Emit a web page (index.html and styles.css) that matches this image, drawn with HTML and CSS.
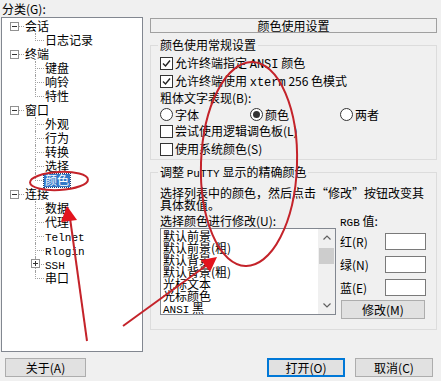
FILE: index.html
```html
<!DOCTYPE html>
<html lang="zh-CN">
<head>
  <meta charset="UTF-8" />
  <meta name="viewport" content="width=device-width, initial-scale=1.0"/>
  <title>PuTTY 配置 - 颜色</title>
  <link rel="stylesheet" href="styles.css">
</head>
<body>
  <div class="dialog">
    <div class="main">
      <div class="left">
        <div class="cat">分类(G):</div>
        <div class="treebox">
          <ul class="tree">
            <li>
              <div class="item"><span class="tog"></span>会话</div>
              <ul class="kids"><li>日志记录</li></ul>
            </li>
            <li>
              <div class="item"><span class="tog"></span>终端</div>
              <ul class="kids"><li>键盘</li><li>响铃</li><li>特性</li></ul>
            </li>
            <li>
              <div class="item"><span class="tog"></span>窗口</div>
              <ul class="kids">
                <li>外观</li><li>行为</li><li>转换</li><li>选择</li>
                <li><span class="sel">颜色</span></li>
              </ul>
            </li>
            <li>
              <div class="item"><span class="tog"></span>连接</div>
              <ul class="kids">
                <li>数据</li><li>代理</li>
                <li><span class="en">Telnet</span></li>
                <li><span class="en">Rlogin</span></li>
                <li><span class="tog plus"></span><span class="en">SSH</span></li>
                <li>串口</li>
              </ul>
            </li>
          </ul>
        </div>
      </div>

      <div class="right">
        <div class="ptitle">颜色使用设置</div>

        <fieldset class="grp g1">
          <legend>颜色使用常规设置</legend>
          <div class="opt"><span class="cb"><svg viewBox="0 0 11 11"><polyline points="2,5.5 4.5,8 9,2.5"/></svg></span><span class="t">允许终端指定 <span class="en">ANSI</span> 颜色</span></div>
          <div class="opt"><span class="cb"><svg viewBox="0 0 11 11"><polyline points="2,5.5 4.5,8 9,2.5"/></svg></span><span class="t">允许终端使用 <span class="en">xterm</span> 256 色模式</span></div>
          <div class="opt lab">粗体文字表现(B):</div>
          <div class="radios">
            <div class="rd"><span class="rb"></span>字体</div>
            <div class="rd"><span class="rb on"></span>颜色</div>
            <div class="rd"><span class="rb"></span>两者</div>
          </div>
          <div class="opt"><span class="cb"></span><span class="t">尝试使用逻辑调色板(L)</span></div>
          <div class="opt"><span class="cb"></span><span class="t">使用系统颜色(S)</span></div>
        </fieldset>

        <fieldset class="grp g2">
          <legend>调整 <span class="en">PuTTY</span> 显示的精确颜色</legend>
          <div class="hint">选择列表中的颜色，然后点击“修改”按钮改变其<br>具体数值。</div>
          <div class="pick">
            <div class="pleft">
              <div class="plab">选择颜色进行修改(U):</div>
              <div class="lbox">
                <ul class="clist">
                  <li>默认前景</li>
                  <li>默认前景(粗)</li>
                  <li>默认背景</li>
                  <li>默认背景(粗)</li>
                  <li>光标文本</li>
                  <li>光标颜色</li>
                  <li><span class="en">ANSI</span> 黑</li>
                </ul>
                <div class="sbar">
                  <div class="arr"><svg width="8" height="5" viewBox="0 0 8 5"><polyline points="0.5,4.5 4,1 7.5,4.5"/></svg></div>
                  <div class="thumb"></div>
                  <div class="arr down"><svg width="8" height="5" viewBox="0 0 8 5"><polyline points="0.5,0.5 4,4 7.5,0.5"/></svg></div>
                </div>
              </div>
            </div>
            <div class="rgb">
              <div class="plab"><span class="en">RGB</span> 值:</div>
              <div class="rgbrows">
                <div class="rgbrow"><span>红(R)</span><span class="num"></span></div>
                <div class="rgbrow"><span>绿(N)</span><span class="num"></span></div>
                <div class="rgbrow"><span>蓝(E)</span><span class="num"></span></div>
              </div>
              <button class="btn mod">修改(M)</button>
            </div>
          </div>
        </fieldset>
      </div>
    </div>

    <div class="foot">
      <button class="btn about">关于(A)</button>
      <button class="btn ok">打开(O)</button>
      <button class="btn cancel">取消(C)</button>
    </div>

    <!-- red annotation marks drawn over the dialog -->
    <svg class="marks" width="441" height="381" viewBox="0 0 441 381">
      <ellipse cx="59" cy="181" rx="29" ry="9" transform="rotate(-3 59 181)"/>
      <ellipse cx="249" cy="164" rx="48" ry="102" transform="rotate(2 249 164)"/>
      <line x1="87" y1="341" x2="70" y2="218"/>
      <polygon points="67,206 61,222 77,220"/>
      <line x1="123" y1="326" x2="207" y2="265"/>
      <polygon points="217,257 201,260 210,272"/>
    </svg>
  </div>
</body>
</html>
```

FILE: styles.css
```css
* {
  box-sizing: border-box;
}

body {
  margin: 0;
  background-color: #f0f0f0;
  font-family: "Noto Sans CJK SC", "Liberation Sans", sans-serif;
  font-size: 12px;
  color: #000;
}

.dialog {
  position: relative;
  width: 441px;
  height: 381px;
  overflow: hidden;
}

.en {
  font-family: "Liberation Mono", monospace;
  font-size: 11px;
  line-height: 10px;
}

.main {
  display: flex;
  height: 352px;
}

/* left: category tree */
.left {
  width: 143px;
  padding-left: 1px;
}

.cat {
  height: 17px;
  line-height: 17px;
  padding-left: 1px;
}

.treebox {
  height: 335px;
  background-color: #fff;
  border: 1px solid #828790;
}

.tree,
.tree ul {
  list-style: none;
  margin: 0;
  padding: 0;
}

.tree {
  padding-top: 1px;
}

.tree li {
  line-height: 14px;
  white-space: nowrap;
}

.item {
  position: relative;
  height: 14px;
  padding-left: 23px;
}

.item::after {
  content: "";
  position: absolute;
  left: 17px;
  top: 7px;
  width: 5px;
  border-top: 1px dotted #a0a0a0;
}

.tog {
  position: absolute;
  left: 8px;
  top: 3px;
  width: 9px;
  height: 9px;
  border: 1px solid #919191;
  background-color: #fff;
  z-index: 1;
}

.tog::before {
  content: "";
  position: absolute;
  left: 1px;
  top: 3px;
  width: 5px;
  border-top: 1px solid #333;
}

.tog.plus {
  left: -4px;
  top: 2px;
}

.tog.plus::after {
  content: "";
  position: absolute;
  left: 3px;
  top: 1px;
  height: 5px;
  border-left: 1px solid #333;
}

.kids {
  padding-left: 33px !important;
}

.kids li {
  position: relative;
  height: 14px;
  padding-left: 10px;
}

.kids li::before {
  content: "";
  position: absolute;
  left: 0;
  top: 0;
  width: 8px;
  height: 7px;
  border-left: 1px dotted #a0a0a0;
  border-bottom: 1px dotted #a0a0a0;
}

.kids li:not(:last-child)::after {
  content: "";
  position: absolute;
  left: 0;
  top: 7px;
  bottom: 0;
  border-left: 1px dotted #a0a0a0;
}

.sel {
  display: inline-block;
  vertical-align: top;
  height: 13px;
  margin-top: 1px;
  line-height: 12px;
  padding: 0 1px;
  margin-left: -1px;
  background-color: #3278c8;
  color: #fff;
  outline: 1px dotted #1a3f73;
}

/* right: colour settings panel */
.right {
  margin-left: 7px;
  width: 287px;
  padding-top: 18px;
}

.ptitle {
  height: 15px;
  line-height: 13px;
  border: 1px solid #a0a0a0;
  text-align: center;
}

.grp {
  margin: 4px 0 0;
  padding: 1px 0 0 9px;
  border: 1px solid #dcdcdc;
  min-width: 0;
}

.grp legend {
  height: 16px;
  padding: 0 2px;
  margin-left: -2px;
  line-height: 16px;
  white-space: nowrap;
}

.opt {
  display: flex;
  align-items: center;
  height: 18px;
  line-height: 16px;
  white-space: nowrap;
}

.opt .en {
  font-size: 12px;
}

.opt.lab {
  height: 16px;
}

.cb {
  display: flex;
  align-items: center;
  justify-content: center;
  flex: none;
  width: 13px;
  height: 13px;
  border: 1px solid #333;
  background-color: #fff;
  margin-right: 2px;
}

.cb svg {
  width: 11px;
  height: 11px;
  fill: none;
  stroke: #222;
  stroke-width: 1.4;
}

.radios {
  display: flex;
  height: 16px;
}

.rd {
  display: flex;
  align-items: center;
  width: 90px;
}

.rb {
  display: flex;
  align-items: center;
  justify-content: center;
  width: 13px;
  height: 13px;
  border: 1px solid #333;
  border-radius: 50%;
  background-color: #fff;
  margin-right: 2px;
}

.rb.on::after {
  content: "";
  width: 7px;
  height: 7px;
  border-radius: 50%;
  background-color: #333;
}

.g1 {
  height: 123px;
}

.g2 {
  margin-top: 4px;
  padding-bottom: 10px;
}

.hint {
  margin-top: 6px;
  line-height: 12px;
  white-space: nowrap;
}

.pick {
  display: flex;
}

.plab {
  margin-top: 3px;
  height: 14px;
  line-height: 14px;
  white-space: nowrap;
}

.pleft {
  width: 176px;
}

.lbox {
  display: flex;
  height: 87px;
  border: 1px solid #828790;
  background-color: #fff;
}

.clist {
  flex: 1;
  list-style: none;
  margin: 0;
  padding: 1px 0 0 2px;
  line-height: 12px;
  overflow: hidden;
  white-space: nowrap;
}

.clist li {
  height: 12px;
}

.sbar {
  width: 17px;
  background-color: #f0f0f0;
  display: flex;
  flex-direction: column;
  align-items: center;
}

.arr {
  height: 17px;
  display: flex;
  align-items: center;
  justify-content: center;
}

.arr svg {
  fill: none;
  stroke: #606060;
  stroke-width: 1.2;
}

.arr.down {
  margin-top: auto;
}

.thumb {
  width: 15px;
  height: 16px;
  margin-top: 2px;
  background-color: #cdcdcd;
}

.rgb {
  width: 86px;
  margin-left: 4px;
}

.rgbrows {
  padding-top: 2px;
}

.rgbrow {
  display: flex;
  align-items: center;
  justify-content: space-between;
  height: 23px;
}

.num {
  width: 41px;
  height: 17px;
  border: 1px solid #7a7a7a;
  background-color: #fff;
}

/* buttons */
.btn {
  height: 19px;
  padding: 0;
  font-family: inherit;
  font-size: 12px;
  line-height: 15px;
  color: #000;
  background-color: #e1e1e1;
  border: 1px solid #adadad;
}

.mod {
  width: 84px;
  margin: 1px 0 0 1px;
}

.foot {
  display: flex;
  margin-top: 6px;
}

.about {
  width: 81px;
  margin-left: 5px;
}

.ok {
  width: 78px;
  margin-left: auto;
  border: 2px solid #0078d7;
}

.cancel {
  width: 78px;
  margin: 0 8px 0 10px;
}

.marks {
  position: absolute;
  left: 0;
  top: 0;
  pointer-events: none;
}

.marks ellipse,
.marks line {
  fill: none;
  stroke: #c4232a;
  stroke-width: 2;
}

.marks polygon {
  fill: #e3141d;
}
```
